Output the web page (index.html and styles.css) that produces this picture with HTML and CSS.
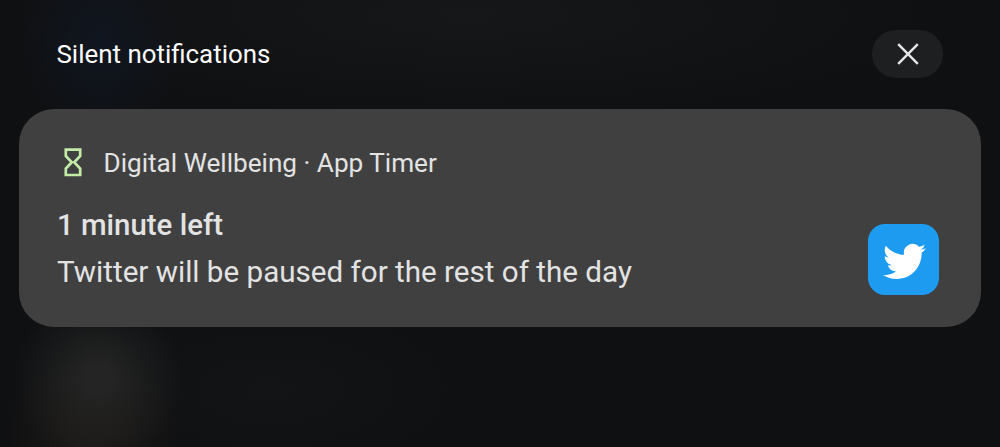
FILE: index.html
```html
<!DOCTYPE html>
<html lang="en">
	<head>
		<meta charset="utf-8" />
		<title>Silent notifications</title>
		<link rel="stylesheet" href="styles.css">
	</head>

	<body>
		<div class="shade">
			<div class="section-header">
				<h2 class="section-title"><span>Silent notifications</span></h2>
				<button class="clear" aria-label="Clear all">
					<svg width="22" height="22" viewBox="0 0 22 22">
						<path d="M1.2 1.2L20.8 20.8M20.8 1.2L1.2 20.8" />
					</svg>
				</button>
			</div>
			<div class="card">
				<div class="card-top">
					<svg class="hourglass" width="18" height="29" viewBox="0 0 18 29">
						<path d="M1.8 1.6H16.2V8L10.2 14.3L16.2 20.6V27H1.8V20.6L7.8 14.3L1.8 8Z" />
					</svg>
					<span class="app-name">Digital Wellbeing · App Timer</span>
				</div>
				<div class="card-body">
					<div class="message">
						<div class="title"><span>1 minute left</span></div>
						<div class="text"><span>Twitter will be paused for the rest of the day</span></div>
					</div>
					<div class="app-icon">
						<svg width="43" height="43" viewBox="0 0 24 24">
							<path d="M23.953 4.57a10 10 0 01-2.825.775 4.958 4.958 0 002.163-2.723c-.951.555-2.005.959-3.127 1.184a4.92 4.92 0 00-8.384 4.482C7.69 8.095 4.067 6.13 1.64 3.162a4.822 4.822 0 00-.666 2.475c0 1.71.87 3.213 2.188 4.096a4.904 4.904 0 01-2.228-.616v.06a4.923 4.923 0 003.946 4.827 4.996 4.996 0 01-2.212.085 4.936 4.936 0 004.604 3.417 9.867 9.867 0 01-6.102 2.105c-.39 0-.779-.023-1.17-.067a13.995 13.995 0 007.557 2.209c9.053 0 13.998-7.496 13.998-13.985 0-.21 0-.42-.015-.63A9.935 9.935 0 0024 4.59z" />
						</svg>
					</div>
				</div>
			</div>
		</div>
	</body>
</html>
```
FILE: styles.css
```css
* {
	padding: 0;
	margin: 0;
	box-sizing: border-box;
}
body {
	font-family: Roboto, sans-serif;
	color: #e3e3e3;
	background-color: #0f1012;
}
/* dark shade with faint colours from the wallpaper */
.shade {
	height: 447px;
	padding: 30px 19px 0;
	overflow: hidden;
	background:
		radial-gradient(ellipse 80px 100px at 100px 45px, #101620, transparent),
		radial-gradient(ellipse 85px 85px at 98px 378px, #232423 15%, rgba(35, 36, 35, 0.5) 55%, transparent),
		radial-gradient(ellipse 90px 75px at 92px 430px, #1c1917 20%, transparent),
		radial-gradient(ellipse 200px 90px at 270px 390px, #131416, transparent),
		radial-gradient(ellipse 480px 110px at 470px 15px, #161719, transparent),
		#0f1012;
}
.section-header {
	display: flex;
	align-items: center;
	justify-content: space-between;
	height: 48px;
	padding: 0 38px 0 37.5px;
}
.section-title {
	font-size: 25.9px;
	font-weight: 400;
	line-height: 48px;
	color: #fbfbfb;
}
.clear {
	display: flex;
	align-items: center;
	justify-content: center;
	width: 71px;
	height: 48px;
	border: none;
	border-radius: 24px;
	background-color: #1e1f21;
}
.clear path {
	fill: none;
	stroke: #e6e6e8;
	stroke-width: 2.4;
}
.card {
	height: 218.5px;
	margin-top: 30.5px;
	padding: 38px 42px 0 38px;
	border-radius: 35px;
	background-color: #404040;
}
.card-top {
	display: flex;
	align-items: center;
	gap: 21.5px;
	height: 32px;
	padding-left: 7px;
}
.hourglass path {
	fill: none;
	stroke: #c3eca8;
	stroke-width: 2.7;
}
.app-name {
	font-size: 26.15px;
}
.card-body {
	display: flex;
	justify-content: space-between;
	margin-top: 23.5px;
}
.title,
.text {
	line-height: 47px;
}
.title {
	font-size: 29.4px;
	font-weight: 500;
}
.text {
	font-size: 29.6px;
}
.app-icon {
	display: flex;
	align-items: center;
	justify-content: center;
	width: 71px;
	height: 71px;
	margin-top: 22px;
	padding: 3px 0 0 2px;
	border-radius: 17px;
	background-color: #1d9bf0;
}
.app-icon path {
	fill: #fff;
}
```
